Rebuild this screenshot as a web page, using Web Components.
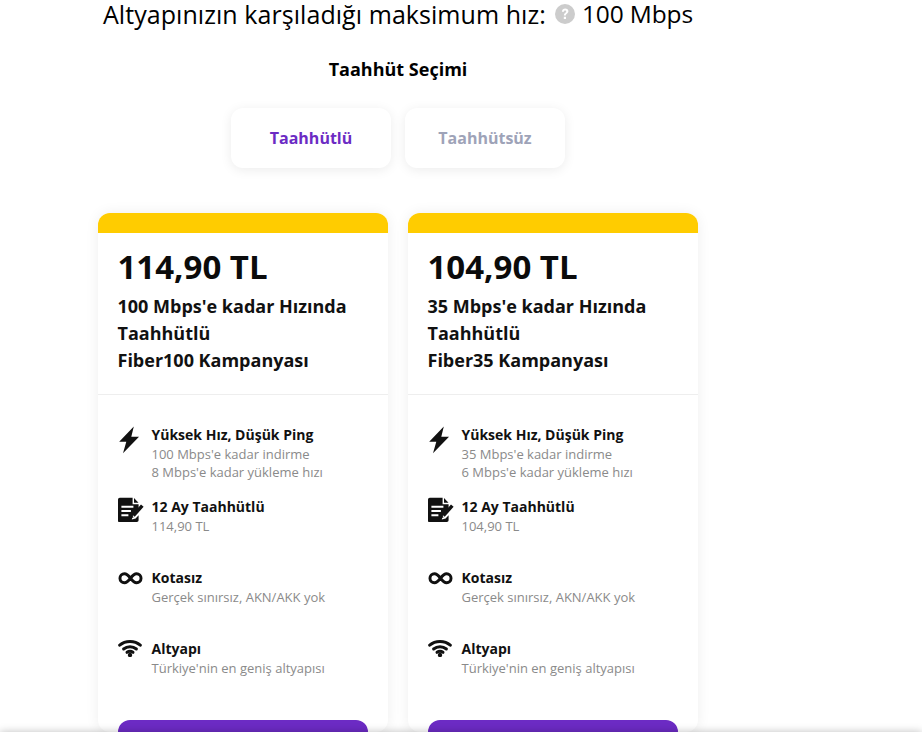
<!DOCTYPE html>
<html lang="tr">
<head>
<meta charset="utf-8">
<title>Taahhüt Seçimi</title>
<style>
  html, body { margin: 0; height: 732px; overflow: hidden; background: #fff; }
  body { font-family: "Open Sans", sans-serif; color: #000; }
</style>
</head>
<body>
<plan-page></plan-page>

<script>
const ICONS = {
  bolt: `<svg viewBox="0 0 24 28" width="24" height="28"><path d="M15.800.6 1.200 15.700h7.100L5 27.300 21 10.800h-7.700z" fill="#111"/></svg>`,
  contract: `<svg viewBox="0 0 26 26" width="26" height="26"><path fill-rule="evenodd" d="M1.800.8h12.800v6.400h6v5.200l-5.800 6.400-1 3.700 3.800-1.100 3-3.100v4.900a1.800 1.800 0 0 1-1.800 1.800h-17A1.800 1.800 0 0 1 0 22.800V2.600A1.800 1.800 0 0 1 1.800.8zM3.400 8.800v2h12v-2zm0 4.200v2h9.500v-2zm0 4.200v2h7v-2z" fill="#111"/><path d="M16 1l4.500 4.700H16z" fill="#111"/><path d="M23 7.500l2.600 2.300-8.900 9.900-2.500-2.200zM13.500 18.300l2.300 2-3.100 1z" fill="#111"/></svg>`,
  infinity: `<svg viewBox="-1 0 28 14" width="25" height="12.500"><path d="M13 7c-2.500-3.300-4.500-5-6.800-5a5 5 0 0 0 0 10c2.300 0 4.300-1.700 6.800-5zm0 0c2.500 3.300 4.500 5 6.800 5a5 5 0 0 0 0-10c-2.300 0-4.300 1.700-6.800 5z" fill="none" stroke="#111" stroke-width="3.300"/></svg>`,
  wifi: `<svg viewBox="0 0 24 18" width="24" height="18"><g fill="none" stroke="#111" stroke-width="3" stroke-linecap="round"><path d="M1.700 6.200C7.300 1.200 16.700 1.200 22.300 6.200"/><path d="M5.600 10c3.600-3 9.200-3 12.800 0"/><path d="M9 13.300c1.700-1.200 4.300-1.200 6 0"/></g><circle cx="12" cy="16" r="2.200" fill="#111"/></svg>`
};

customElements.define('plan-page', class extends HTMLElement {
  constructor() {
    super();
    this.attachShadow({mode: 'open'});
    this.shadowRoot.innerHTML = `
      <style>
        :host { display: block; width: 600px; margin-left: 98px; }
        h1 {
          margin: 0;
          font: 400 25px/28px "Open Sans", sans-serif;
          display: flex;
          justify-content: center;
          align-items: center;
        }
        h1 .label { letter-spacing: .06px; margin-right: 9px; }
        h1 svg { display: block; margin-right: 7px; }
        h1 .speed { font-size: 24.500px; letter-spacing: -.12px; }
        h2 {
          margin: 26px 0 0;
          font: 700 18px/30px "Open Sans", sans-serif;
          text-align: center;
        }
        .tabs { display: flex; justify-content: center; gap: 14px; margin-top: 24px; }
        .cards { display: flex; gap: 20px; margin-top: 45px; }
        .bar {
          position: fixed;
          left: 0; right: 0; top: 732px;
          height: 40px;
          box-shadow: 0 0 8px rgba(0,0,0,.25);
        }
      </style>
      <h1><span class="label">Altyapınızın karşıladığı maksimum hız:</span>
        <svg viewBox="0 0 20 20" width="20" height="20"><circle cx="10" cy="10" r="10" fill="#ccc"/><path d="M6.900 7.700c.2-2 1.500-3.100 3.300-3.100 1.900 0 3.200 1.100 3.200 2.700 0 2.300-2.500 2.300-2.500 4.300H8.900c0-2.800 2.300-2.900 2.300-4.200 0-.6-.4-1-1.100-1-.7 0-1.100.4-1.200 1.300zM8.800 12.800h2.200v2.200H8.800z" fill="#fff"/></svg>
        <span class="speed">100 Mbps</span></h1>
      <h2>Taahhüt Seçimi</h2>
      <div class="tabs">
        <tab-button active>Taahhütlü</tab-button>
        <tab-button>Taahhütsüz</tab-button>
      </div>
      <div class="cards">
        <plan-card price="114,90 TL" speed="100" up="8" name="Fiber100"></plan-card>
        <plan-card price="104,90 TL" speed="35" up="6" name="Fiber35"></plan-card>
      </div>
      <div class="bar"></div>
    `;
  }
});

customElements.define('tab-button', class extends HTMLElement {
  constructor() {
    super();
    this.attachShadow({mode: 'open'});
    this.shadowRoot.innerHTML = `
      <style>
        :host {
          display: flex;
          align-items: center;
          justify-content: center;
          width: 160px;
          height: 60px;
          border-radius: 12px;
          background: #fff;
          box-shadow: 0 2px 12px rgba(0,0,0,.08);
          font: 700 16px/22px "Open Sans", sans-serif;
          color: #9ea3b8;
        }
        :host([active]) { color: #6c2bc4; }
      </style>
      <slot></slot>
    `;
  }
});

customElements.define('plan-card', class extends HTMLElement {
  constructor() {
    super();
    this.attachShadow({mode: 'open'});
  }
  connectedCallback() {
    const price = this.getAttribute('price');
    const speed = this.getAttribute('speed');
    const up = this.getAttribute('up');
    const name = this.getAttribute('name');
    this.shadowRoot.innerHTML = `
      <style>
        :host {
          display: block;
          width: 290px;
          height: 519px;
          border-radius: 12px;
          background: #fff;
          box-shadow: 0 0 14px rgba(0,0,0,.07);
          overflow: hidden;
          flex: none;
        }
        .stripe { height: 20px; background: #ffcc00; }
        .top { padding: 12px 20px 21px; border-bottom: 1px solid #eee; height: 128px; }
        .price { font: 700 33px/44px "Open Sans", sans-serif; color: #0b0b0b; margin-left: -.5px; }
        .title { margin-top: 4px; font: 700 18px/27px "Open Sans", sans-serif; color: #111; margin-left: -.5px; }
        .features { padding: 30px 20px 0; display: flex; flex-direction: column; }
        .cta { height: 48px; margin: 0 20px; border-radius: 12px; background: #6c2bc4; }
      </style>
      <div class="stripe"></div>
      <div class="top">
        <div class="price">${price}</div>
        <div class="title">${speed} Mbps'e kadar Hızında<br>Taahhütlü<br>${name} Kampanyası</div>
      </div>
      <div class="features">
        <plan-feature icon="bolt" drop="1" h="72" heading="Yüksek Hız, Düşük Ping">${speed} Mbps'e kadar indirme<br>${up} Mbps'e kadar yükleme hızı</plan-feature>
        <plan-feature icon="contract" h="71" heading="12 Ay Taahhütlü">${price}</plan-feature>
        <plan-feature icon="infinity" drop="4" h="71" heading="Kotasız">Gerçek sınırsız, AKN/AKK yok</plan-feature>
        <plan-feature icon="wifi" h="81" heading="Altyapı">Türkiye'nin en geniş altyapısı</plan-feature>
      </div>
      <div class="cta"></div>
    `;
  }
});

customElements.define('plan-feature', class extends HTMLElement {
  constructor() {
    super();
    this.attachShadow({mode: 'open'});
  }
  connectedCallback() {
    this.shadowRoot.innerHTML = `
      <style>
        :host { display: flex; gap: 8px; height: ${this.getAttribute('h')}px; }
        .icon { width: 26px; flex: none; display: flex; justify-content: flex-start; padding-top: ${this.getAttribute('drop') || 0}px; }
        .icon svg { display: block; }
        .text { margin-left: -.5px; }
        .head { font: 700 14px/19px "Open Sans", sans-serif; color: #111; }
        .sub { margin-top: 1px; font: 400 13px/18px "Open Sans", sans-serif; color: #8a8a8a; }
      </style>
      <div class="icon">${ICONS[this.getAttribute('icon')]}</div>
      <div class="text">
        <div class="head">${this.getAttribute('heading')}</div>
        <div class="sub"><slot></slot></div>
      </div>
    `;
  }
});
</script>
</body>
</html>
